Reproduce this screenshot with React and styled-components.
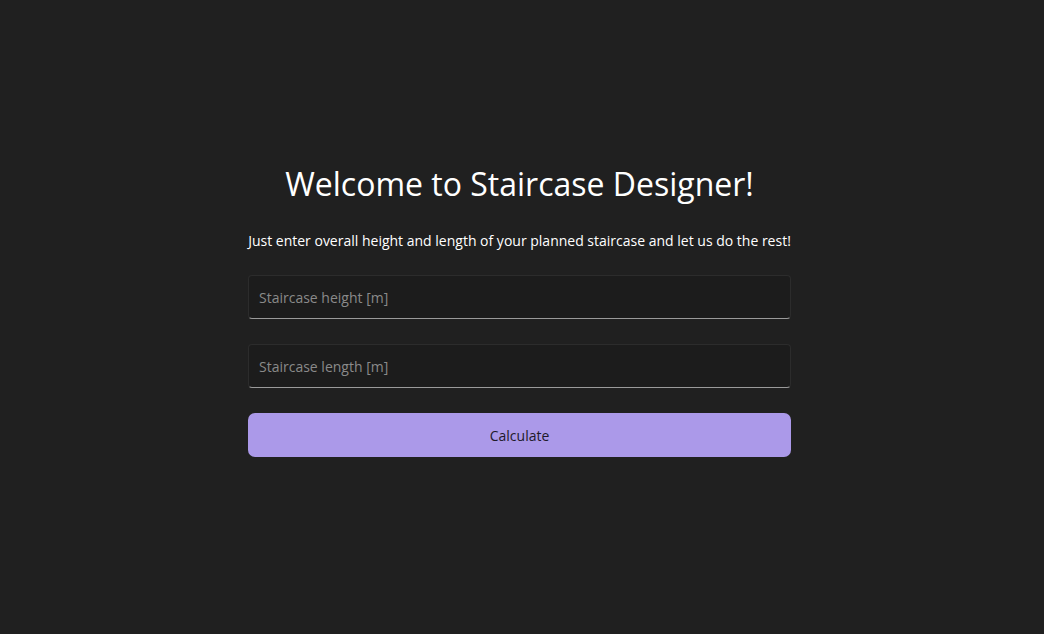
import React, { useState } from 'react'
import styled, { createGlobalStyle } from 'styled-components'

const GlobalStyle = createGlobalStyle`
    html, body {
        margin: 0;
        padding: 0;
        height: 100%;
        background: #202020;
    }
    #root {
        height: 100%;
    }
`;

function App() {
    const [height, setHeight] = useState('');
    const [length, setLength] = useState('');

    return (
        <>
        <GlobalStyle />
        <Page>
            <Form onSubmit={(e) => e.preventDefault()}>
                <Title>Welcome to Staircase Designer!</Title>
                <Subtitle>Just enter overall height and length of your planned staircase and let us do the rest!</Subtitle>
                <Field>
                    <Input placeholder="Staircase height [m]" value={height} onChange={(e) => setHeight(e.target.value)} />
                </Field>
                <Field>
                    <Input placeholder="Staircase length [m]" value={length} onChange={(e) => setLength(e.target.value)} />
                </Field>
                <Button type="submit">Calculate</Button>
            </Form>
        </Page>
        </>
    )
}

export default App

const Page = styled.div`
    min-height: 100%;
    display: flex;
    justify-content: center;
    align-items: center;
    padding-right: 5px;
    box-sizing: border-box;
    font-family: "Open Sans", "Noto Sans", sans-serif;
    color: #ffffff;
`;

const Form = styled.form`
    width: 543px;
    display: flex;
    flex-direction: column;
    align-items: stretch;
    margin-top: -15px;
`;

const Title = styled.h1`
    margin: 0;
    text-align: center;
    font-size: 32px;
    font-weight: 400;
    line-height: 44px;
`;

const Subtitle = styled.p`
    margin: 25px 0 24px;
    text-align: center;
    font-size: 14px;
    line-height: 20px;
    white-space: nowrap;
`;

const Field = styled.div`
    margin-bottom: 25px;
    height: 44px;
    box-sizing: border-box;
    border: 1px solid #2c2c2c;
    border-bottom: 1px solid #9a9a9a;
    border-radius: 4px;
    background: #1c1c1c;
    display: flex;
    align-items: center;
`;

const Input = styled.input`
    flex: 1;
    height: 100%;
    border: none;
    outline: none;
    background: transparent;
    padding: 0 10px;
    font-family: inherit;
    font-size: 14px;
    color: #ffffff;

    &::placeholder {
        color: #8a8a8a;
    }
`;

const Button = styled.button`
    height: 44px;
    border: none;
    border-radius: 7px;
    background: #ab99e9;
    color: #1e1a2a;
    font-family: inherit;
    font-size: 14px;
    cursor: pointer;
`;
